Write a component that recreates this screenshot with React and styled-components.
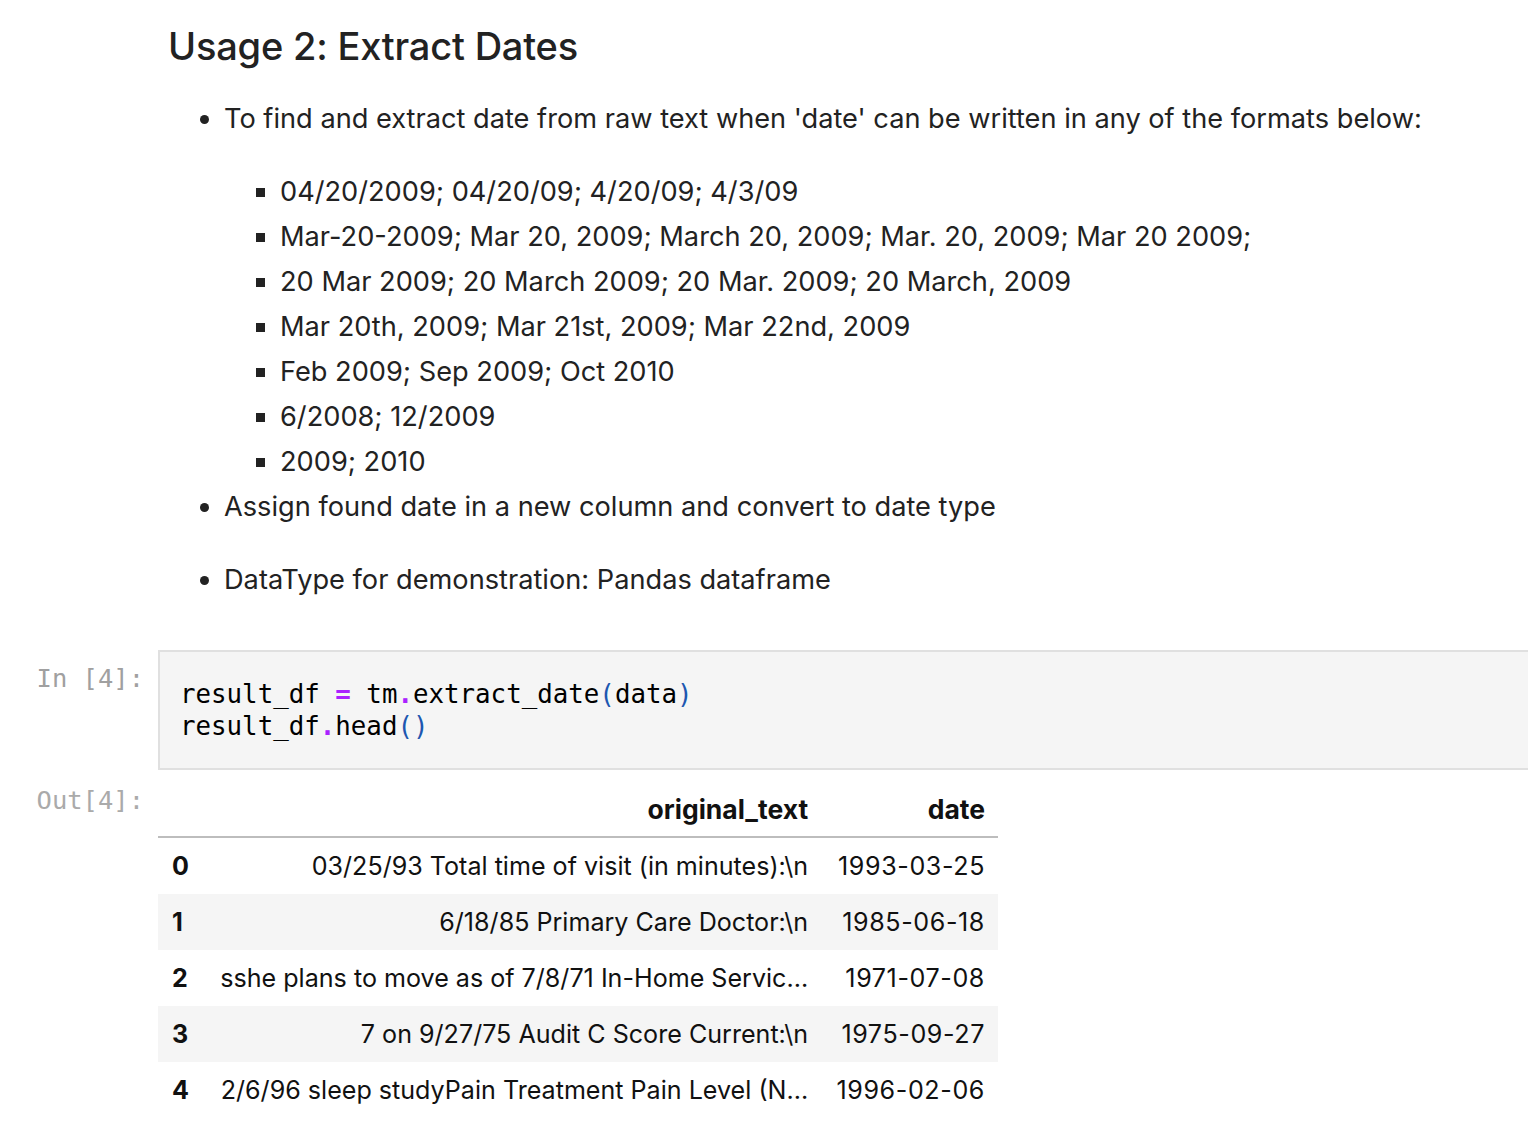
import React from "react";
import styled, { createGlobalStyle } from "styled-components";

const GlobalStyle = createGlobalStyle`
  html, body {
    margin: 0;
    padding: 0;
    background: #fff;
  }
  body {
    font-family: Inter, "Noto Sans", sans-serif;
    color: #222;
  }
`;

const Notebook = styled.div`
  width: 1528px;
  overflow: hidden;
`;

const MarkdownCell = styled.div`
  padding: 0 0 0 168px;
`;

const Heading = styled.h2`
  margin: 0;
  padding-top: 22px;
  font-size: 38px;
  line-height: 48px;
  font-weight: 500;
  letter-spacing: -0.2px;
  color: #222;
`;

const BulletList = styled.ul`
  margin: 26px 0 0;
  padding-left: 56px;
  list-style: disc;
  font-size: 27.2px;
  line-height: 45px;
`;

const Bullet = styled.li`
  margin-bottom: ${(p) => (p.$spaced ? "28px" : "0")};
`;

const SubList = styled.ul`
  margin: 28px 0 0;
  padding-left: 56px;
  list-style: square;
`;

const Row = styled.div`
  display: flex;
  align-items: flex-start;
`;

const Prompt = styled.div`
  width: 144px;
  flex: none;
  text-align: right;
  padding-right: 14px;
  padding-top: ${(p) => (p.$out ? "3px" : "12px")};
  font-family: "DejaVu Sans Mono", monospace;
  font-size: 25.5px;
  line-height: 32px;
  color: ${(p) => (p.$out ? "#aaaaaa" : "#a0a0a0")};
`;

const CodeRow = styled(Row)`
  margin-top: 48px;
`;

const CodeBox = styled.pre`
  flex: 1;
  margin: 0 -20px 0 0;
  padding: 26px 20px;
  background: #f5f5f5;
  border: 2px solid #e0e0e0;
  font-family: "DejaVu Sans Mono", monospace;
  font-size: 25.8px;
  line-height: 32px;
  color: #000;
`;

const Op = styled.span`
  color: #aa22ff;
  font-weight: bold;
`;

const Paren = styled.span`
  color: #1d57b0;
`;

const OutRow = styled(Row)`
  margin-top: 11px;
  padding-bottom: 40px;
`;

const Table = styled.table`
  border-collapse: collapse;
  width: 840px;
  font-size: 25.1px;
  color: #111;
`;

const HeadCell = styled.th`
  height: 55px;
  padding: 0 13px;
  text-align: right;
  font-size: 26.5px;
  font-weight: 700;
  border-bottom: 2px solid #bdbdbd;
  white-space: nowrap;
`;

const BodyRow = styled.tr`
  background: ${(p) => (p.$striped ? "#f5f5f5" : "#fff")};
`;

const IndexCell = styled.th`
  height: 56px;
  padding: 0 12px 0 14px;
  text-align: left;
  font-weight: 700;
  width: 14px;
`;

const Cell = styled.td`
  height: 56px;
  padding: 0 13px 0 ${(p) => (p.$date ? "13px" : "11px")};
  text-align: right;
  white-space: nowrap;
  letter-spacing: ${(p) => (p.$date ? "0.6px" : "0")};
`;

const subItems = [
  "04/20/2009; 04/20/09; 4/20/09; 4/3/09",
  "Mar-20-2009; Mar 20, 2009; March 20, 2009; Mar. 20, 2009; Mar 20 2009;",
  "20 Mar 2009; 20 March 2009; 20 Mar. 2009; 20 March, 2009",
  "Mar 20th, 2009; Mar 21st, 2009; Mar 22nd, 2009",
  "Feb 2009; Sep 2009; Oct 2010",
  "6/2008; 12/2009",
  "2009; 2010",
];

const rows = [
  ["0", "03/25/93 Total time of visit (in minutes):\\n", "1993-03-25"],
  ["1", "6/18/85 Primary Care Doctor:\\n", "1985-06-18"],
  ["2", "sshe plans to move as of 7/8/71 In-Home Servic...", "1971-07-08"],
  ["3", "7 on 9/27/75 Audit C Score Current:\\n", "1975-09-27"],
  ["4", "2/6/96 sleep studyPain Treatment Pain Level (N...", "1996-02-06"],
];

export default function App() {
  return (
    <Notebook>
      <GlobalStyle />
      <MarkdownCell>
        <Heading>Usage 2: Extract Dates</Heading>
        <BulletList>
          <Bullet>
            To find and extract date from raw text when 'date' can be written in any of the formats below:
            <SubList>
              {subItems.map((s, i) => (
                <li key={i}>{s}</li>
              ))}
            </SubList>
          </Bullet>
          <Bullet $spaced>Assign found date in a new column and convert to date type</Bullet>
          <Bullet>DataType for demonstration: Pandas dataframe</Bullet>
        </BulletList>
      </MarkdownCell>

      <CodeRow>
        <Prompt>In [4]:</Prompt>
        <CodeBox>
          result_df <Op>=</Op> tm<Op>.</Op>extract_date<Paren>(</Paren>data<Paren>)</Paren>
          {"\n"}
          result_df<Op>.</Op>head<Paren>()</Paren>
        </CodeBox>
      </CodeRow>

      <OutRow>
        <Prompt $out>Out[4]:</Prompt>
        <Table>
          <thead>
            <tr>
              <HeadCell />
              <HeadCell>original_text</HeadCell>
              <HeadCell>date</HeadCell>
            </tr>
          </thead>
          <tbody>
            {rows.map(([idx, text, date], i) => (
              <BodyRow key={idx} $striped={i % 2 === 1}>
                <IndexCell>{idx}</IndexCell>
                <Cell>{text}</Cell>
                <Cell $date>{date}</Cell>
              </BodyRow>
            ))}
          </tbody>
        </Table>
      </OutRow>
    </Notebook>
  );
}
